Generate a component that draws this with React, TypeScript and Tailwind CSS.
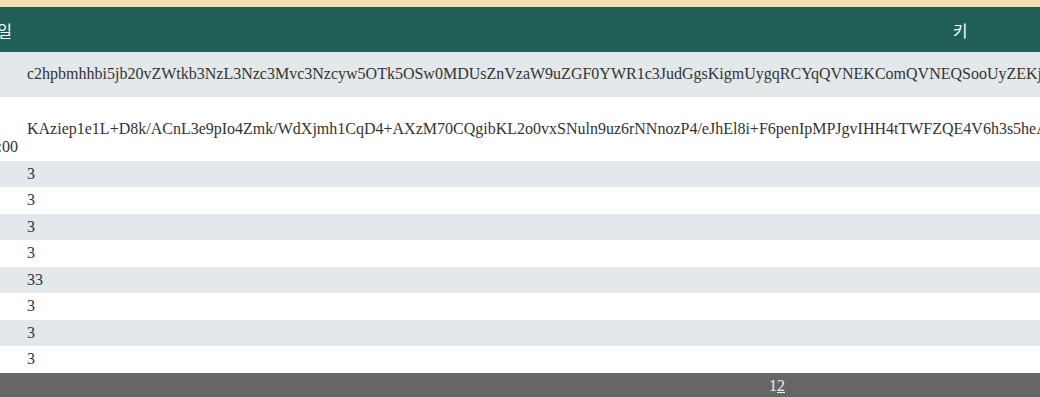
import React from "react";

const serif = "font-['Liberation_Serif','Times_New_Roman',serif]";

type Row = { date: React.ReactNode; key: string };

const rows: Row[] = [
  {
    date: (
      <>
        {"\u00a0"}
        <br />
        {"\u00a0"}
      </>
    ),
    key: "c2hpbmhhbi5jb20vZWtkb3NzL3Nzc3Mvc3Nzcyw5OTk5OSw0MDUsZnVzaW9uZGF0YWR1c3JudGgsKigmUygqRCYqQVNEKComQVNEQSooUyZEKjEyMzQ1Njc4OTAhQCMkJV4mKigpXys9LQ==",
  },
  {
    date: (
      <>
        2023-
        <br />
        05-17
        <br />
        00:00:00
      </>
    ),
    key: "KAziep1e1L+D8k/ACnL3e9pIo4Zmk/WdXjmh1CqD4+AXzM70CQgibKL2o0vxSNuln9uz6rNNnozP4/eJhEl8i+F6penIpMPJgvIHH4tTWFZQE4V6h3s5heAq9Xk2LmPz8W1r==",
  },
  { date: "\u00a0", key: "3" },
  { date: "\u00a0", key: "3" },
  { date: "\u00a0", key: "3" },
  { date: "\u00a0", key: "3" },
  { date: "\u00a0", key: "33" },
  { date: "\u00a0", key: "3" },
  { date: "\u00a0", key: "3" },
  { date: "\u00a0", key: "3" },
];

export default function App() {
  return (
    <div className={`w-[1040px] h-[397px] overflow-hidden bg-white text-[16px] text-[#333333] ${serif}`}>
      <div className="h-[7px] bg-[#f5deb3]" />
      <div className="ml-[-43px] w-[1950px]">
        <div className="flex h-[45px] bg-[#1f5f57] text-white font-['Noto_Sans_CJK_KR','Noto_Sans',sans-serif] text-[16px]">
          <div className="w-[66px] shrink-0 flex items-center justify-center whitespace-nowrap">등록일</div>
          <div className="w-[1874px] shrink-0 flex items-center justify-center">키</div>
        </div>
        {rows.map((r, i) => (
          <div
            key={i}
            className={`flex items-center leading-[18.5px] ${i % 2 === 0 ? "bg-[#e3e8ea]" : "bg-white"}`}
          >
            <div className="w-[66px] shrink-0 p-1 whitespace-nowrap">{r.date}</div>
            <div className="shrink-0 p-1 whitespace-nowrap">{r.key}</div>
          </div>
        ))}
        <div className="flex h-[30px] bg-[#666666] text-[#f0f0f0] leading-[18.5px] pt-[4px]">
          <div className="pl-[812px] whitespace-nowrap">
            <span>1</span>
            <span className="underline">2</span>
          </div>
        </div>
      </div>
    </div>
  );
}
